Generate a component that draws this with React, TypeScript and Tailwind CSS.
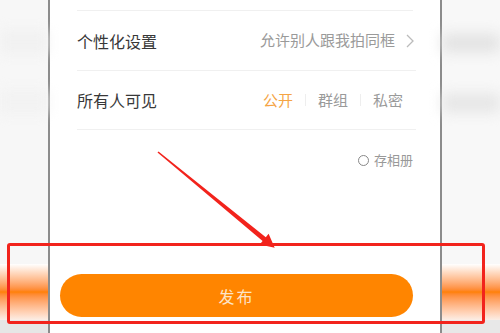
import React from "react";

export default function App() {
  return (
    <div
      className="relative w-[500px] h-[333px] overflow-hidden bg-white flex"
      style={{ fontFamily: '"Noto Sans CJK SC", "Noto Sans", sans-serif' }}
    >
      {/* left blurred strip */}
      <div className="w-[48px] h-full flex flex-col bg-[#f7f7f7]">
        <div className="h-[30px]" />
        <div className="h-[24px] bg-[#f1f1f1] blur-[6px]" />
        <div className="h-[36px]" />
        <div className="h-[24px] bg-[#f2f2f2] blur-[6px]" />
        <div className="h-[150px]" />
        <div className="h-[56px] bg-gradient-to-b from-[#fff] via-[#ff8000] to-[#fbeee6]" />
        <div className="flex-1 bg-[#e6e6e6]" />
      </div>

      {/* phone */}
      <div className="w-[394px] h-full bg-white border-x-2 border-[#8c8c8c] flex flex-col">
        <div className="h-[11px] mx-[27px] border-b border-[#f0f0f0]" />
        <div className="h-[60px] ml-[27px] mr-[24px] flex items-center justify-between border-b border-[#f0f0f0]">
          <span className="text-[16px] text-[#383838]">个性化设置</span>
          <span className="flex items-center text-[15px] text-[#9a9a9a]">
            允许别人跟我拍同框
            <svg width="10" height="16" viewBox="0 0 10 16" className="ml-[10px] mr-[1px]">
              <path d="M2 2 L8 8 L2 14" fill="none" stroke="#bbb" strokeWidth="1.3" />
            </svg>
          </span>
        </div>
        <div className="h-[59px] ml-[27px] mr-[24px] flex items-center justify-between border-b border-[#f0f0f0]">
          <span className="text-[16px] text-[#383838]">所有人可见</span>
          <span className="flex items-center text-[15px] mr-[13px]">
            <span className="text-[#f5a445]">公开</span>
            <span className="w-px h-[12px] bg-[#eee] mx-[12px]" />
            <span className="text-[#9a9a9a]">群组</span>
            <span className="w-px h-[12px] bg-[#eee] mx-[12px]" />
            <span className="text-[#9a9a9a]">私密</span>
          </span>
        </div>
        <div className="h-[60px] mr-[27px] flex items-center justify-end">
          <span className="w-[11px] h-[11px] rounded-full border-[1.5px] border-[#888] mr-[5px]" />
          <span className="text-[13px] text-[#999]">存相册</span>
        </div>
        <div className="h-[84px]" />
        <div className="ml-[10px] w-[353px] h-[43px] rounded-full bg-[#ff8500] flex items-center justify-center">
          <span className="text-[16px] text-[#fde4c8] tracking-[2px]">发布</span>
        </div>
      </div>

      {/* right blurred strip */}
      <div className="flex-1 h-full flex flex-col bg-[#f8f8f8]">
        <div className="h-[34px]" />
        <div className="h-[18px] bg-[#e2e2e2] blur-[7px]" />
        <div className="h-[42px]" />
        <div className="h-[18px] bg-[#e5e5e5] blur-[7px]" />
        <div className="h-[152px]" />
        <div className="h-[56px] bg-gradient-to-b from-[#fff] via-[#ff8000] to-[#fbeee6]" />
        <div className="flex-1 bg-[#e8e8e8]" />
      </div>

      {/* red highlight box */}
      <div className="absolute left-[7px] top-[243px] w-[478px] h-[81px] border-[3px] border-[#f2231c] rounded-[3px]" />

      {/* red arrow */}
      <svg className="absolute left-0 top-0" width="500" height="333" viewBox="0 0 500 333">
        <polygon
          points="157.5,152.6 158.5,151.4 265.8,237.2 268.6,233.7 274.7,247.7 259.8,244.5 262.6,241"
          fill="#f2231c"
        />
      </svg>
    </div>
  );
}
